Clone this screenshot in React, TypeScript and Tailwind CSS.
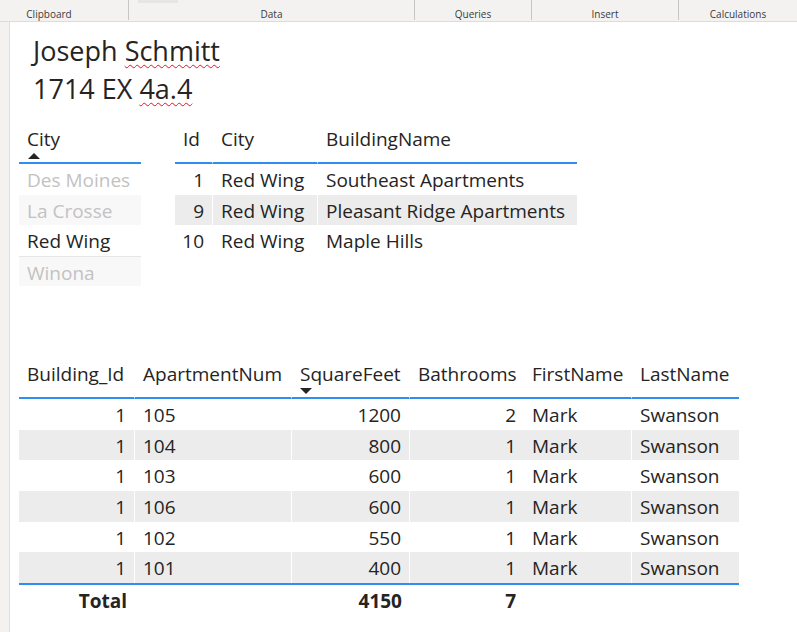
import React from "react";

const font = { fontFamily: '"Open Sans", "Noto Sans", sans-serif' };

function SortUp() {
  return (
    <svg width="12" height="6" viewBox="0 0 12 6" className="block">
      <path d="M0 6 L6 0 L12 6 Z" fill="#252423" />
    </svg>
  );
}

function SortDown() {
  return (
    <svg width="12" height="6" viewBox="0 0 12 6" className="block">
      <path d="M0 0 L12 0 L6 6 Z" fill="#252423" />
    </svg>
  );
}

const cities = [
  { name: "Des Moines", on: false },
  { name: "La Crosse", on: false },
  { name: "Red Wing", on: true },
  { name: "Winona", on: false },
];

const buildings = [
  { id: 1, city: "Red Wing", name: "Southeast Apartments" },
  { id: 9, city: "Red Wing", name: "Pleasant Ridge Apartments" },
  { id: 10, city: "Red Wing", name: "Maple Hills" },
];

const apartments = [
  { b: 1, num: "105", sq: 1200, bath: 2 },
  { b: 1, num: "104", sq: 800, bath: 1 },
  { b: 1, num: "103", sq: 600, bath: 1 },
  { b: 1, num: "106", sq: 600, bath: 1 },
  { b: 1, num: "102", sq: 550, bath: 1 },
  { b: 1, num: "101", sq: 400, bath: 1 },
];

export default function App() {
  return (
    <div className="w-[797px] h-[632px] overflow-hidden bg-white flex flex-col text-[#252423]" style={font}>
      {/* ribbon group labels */}
      <div className="h-[22px] flex bg-[#f3f2f1] border-b border-[#dcdcdc] text-[10px] text-[#3b3a39]">
        <div className="w-[129px] h-[20px] border-r border-[#c8c6c4] pr-[30px] flex items-end justify-center leading-[12px]">Clipboard</div>
        <div className="w-[286px] h-[20px] border-r border-[#c8c6c4] flex flex-col">
          <div className="ml-[9px] w-[40px] h-[3px] bg-[#e6e5e4]" />
          <div className="flex-1 flex items-end justify-center leading-[12px]">Data</div>
        </div>
        <div className="w-[117px] h-[20px] border-r border-[#c8c6c4] flex items-end justify-center leading-[12px]">Queries</div>
        <div className="w-[147px] h-[20px] border-r border-[#c8c6c4] flex items-end justify-center leading-[12px]">Insert</div>
        <div className="w-[118px] h-[20px] flex items-end justify-center leading-[12px]">Calculations</div>
      </div>

      <div className="flex-1 flex">
        <div className="w-[10px] bg-[#f3f2f1] border-r border-[#e1dfdd]" />

        <div className="flex-1 flex flex-col">
          {/* title */}
          <div className="mt-[10px] ml-[23px] text-[27px] leading-[38px] text-[#252423]">
            <div>
              Joseph <span className="underline decoration-wavy decoration-[#e81123] decoration-1 underline-offset-[3px]">Schmitt</span>
            </div>
            <div>
              1714 EX <span className="underline decoration-wavy decoration-[#e81123] decoration-1 underline-offset-[3px]">4a.4</span>
            </div>
          </div>

          <div className="mt-[14px] ml-[9px] flex gap-[34px] text-[19px]">
            {/* city slicer */}
            <div className="w-[122px]">
              <div className="h-[42px] border-b-2 border-[#2f8ff0] pl-[8px] pt-[5px]">
                <div className="leading-[24px]">City</div>
                <div className="mt-[2px] ml-[1px]"><SortUp /></div>
              </div>
              {cities.map((c, i) => (
                <div
                  key={c.name}
                  className={
                    "h-[30.5px] pl-[8px] pt-[1px] leading-[30px] whitespace-nowrap " +
                    (c.on ? "text-[#252423] " : "text-[#c2c2c2] ") +
                    (i % 2 === 1 ? "bg-[#f8f8f8] " : "") +
                    (i === 3 ? "border-t border-[#e6e6e6]" : "")
                  }
                >
                  {c.name}
                </div>
              ))}
            </div>

            {/* buildings table */}
            <div className="w-[402px]">
              <div className="grid grid-cols-[38px_105px_259px] h-[42px]">
                <div className="border-b-2 border-[#2f8ff0] border-r border-r-white pl-[8px] pt-[5px] leading-[24px]">Id</div>
                <div className="border-b-2 border-[#2f8ff0] border-r border-r-white pl-[8px] pt-[5px] leading-[24px]">City</div>
                <div className="border-b-2 border-[#2f8ff0] pl-[8px] pt-[5px] leading-[24px]">BuildingName</div>
              </div>
              {buildings.map((b, i) => (
                <div key={b.id} className={"grid grid-cols-[38px_105px_259px] h-[30.5px] leading-[30px] " + (i % 2 === 1 ? "bg-[#ececec]" : "")}>
                  <div className="text-right pr-[8px] pt-[1px] border-r border-white">{b.id}</div>
                  <div className="pl-[8px] pt-[1px] border-r border-white whitespace-nowrap">{b.city}</div>
                  <div className="pl-[8px] pt-[1px] whitespace-nowrap">{b.name}</div>
                </div>
              ))}
            </div>
          </div>

          {/* apartments table */}
          <div className="mt-[71px] ml-[9px] w-[720px] text-[19px]">
            <div className="grid grid-cols-[116px_157px_118px_114px_108px_107px] h-[42px]">
              <div className="border-b-2 border-[#2f8ff0] border-r border-r-white pl-[8px] pt-[5px] leading-[24px] whitespace-nowrap">Building_Id</div>
              <div className="border-b-2 border-[#2f8ff0] border-r border-r-white pl-[8px] pt-[5px] leading-[24px] whitespace-nowrap">ApartmentNum</div>
              <div className="border-b-2 border-[#2f8ff0] border-r border-r-white pl-[8px] pt-[5px] whitespace-nowrap">
                <div className="leading-[24px]">SquareFeet</div>
                <div className="mt-[2px]"><SortDown /></div>
              </div>
              <div className="border-b-2 border-[#2f8ff0] pl-[8px] pt-[5px] leading-[24px] whitespace-nowrap">Bathrooms</div>
              <div className="border-b-2 border-[#2f8ff0] border-r border-r-white pl-[8px] pt-[5px] leading-[24px] whitespace-nowrap">FirstName</div>
              <div className="border-b-2 border-[#2f8ff0] pl-[8px] pt-[5px] leading-[24px] whitespace-nowrap">LastName</div>
            </div>
            {apartments.map((a, i) => (
              <div
                key={a.num}
                className={"grid grid-cols-[116px_157px_118px_114px_108px_107px] h-[30.67px] leading-[30px] " + (i % 2 === 1 ? "bg-[#ececec]" : "")}
              >
                <div className="text-right pr-[8px] pt-[1px] border-r border-white">{a.b}</div>
                <div className="pl-[8px] pt-[1px] border-r border-white">{a.num}</div>
                <div className="text-right pr-[8px] pt-[1px] border-r border-white">{a.sq}</div>
                <div className="text-right pr-[8px] pt-[1px]">{a.bath}</div>
                <div className="pl-[8px] pt-[1px] border-r border-white">Mark</div>
                <div className="pl-[8px] pt-[1px]">Swanson</div>
              </div>
            ))}
            <div className="grid grid-cols-[116px_157px_118px_114px_108px_107px] h-[32px] leading-[32px] border-t-2 border-[#2f8ff0] font-bold">
              <div className="text-right pr-[8px]">Total</div>
              <div />
              <div className="text-right pr-[8px]">4150</div>
              <div className="text-right pr-[8px]">7</div>
              <div />
              <div />
            </div>
          </div>
        </div>
      </div>
    </div>
  );
}
